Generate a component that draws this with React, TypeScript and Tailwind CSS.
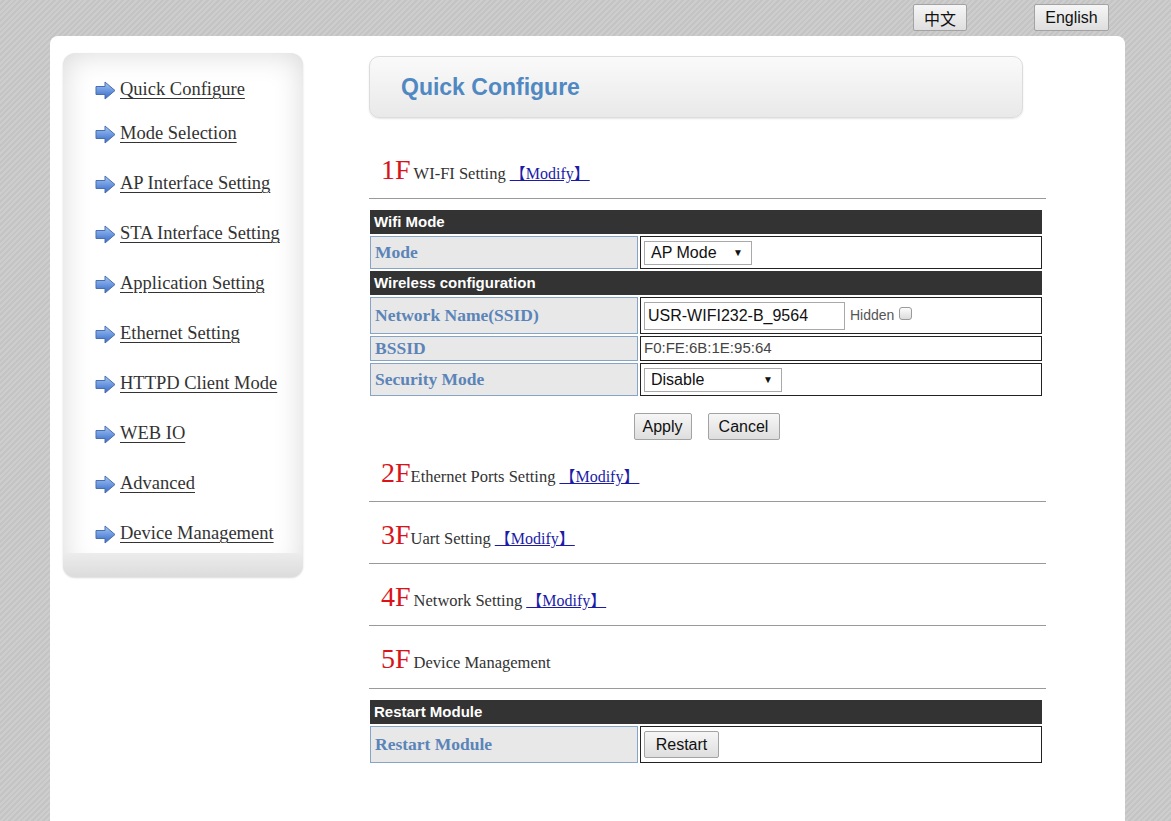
import React from "react";

const serif = "font-['Liberation_Serif','Noto_Sans_CJK_SC',serif]";
const sans = "font-['Liberation_Sans',Arial,sans-serif]";

const menu = [
  "Quick Configure",
  "Mode Selection",
  "AP Interface Setting",
  "STA Interface Setting",
  "Application Setting",
  "Ethernet Setting",
  "HTTPD Client Mode",
  "WEB IO",
  "Advanced",
  "Device Management",
];

function ArrowIcon() {
  return (
    <svg width="21" height="19" viewBox="0 0 21 19" className="shrink-0">
      <defs>
        <linearGradient id="arr" x1="0" y1="0" x2="0" y2="1">
          <stop offset="0" stopColor="#a9c6f2" />
          <stop offset="0.5" stopColor="#6b98e0" />
          <stop offset="1" stopColor="#3b68c2" />
        </linearGradient>
      </defs>
      <polygon
        points="1,5.5 10,5.5 10,1 20,9.5 10,18 10,13.5 1,13.5"
        fill="url(#arr)"
        stroke="#4a6fae"
        strokeWidth="1"
        strokeLinejoin="round"
      />
    </svg>
  );
}

function GrayButton({ children, className = "" }: { children: React.ReactNode; className?: string }) {
  return (
    <button
      className={`flex items-center justify-center rounded-[2px] border border-[#a3a3a3] bg-gradient-to-b from-[#f6f6f6] to-[#dedede] text-[16px] text-[#111] ${sans} ${className}`}
    >
      {children}
    </button>
  );
}

function FakeSelect({ value, width }: { value: string; width: string }) {
  return (
    <div
      className={`flex h-[24px] items-center justify-between border border-[#a9a9a9] bg-white pl-[6px] pr-[8px] text-[16px] text-[#111] ${sans} ${width}`}
    >
      <span>{value}</span>
      <span className="text-[10px]">▼</span>
    </div>
  );
}

function Section({
  num,
  label,
  modify,
  space = true,
  className = "",
}: {
  num: string;
  label: string;
  modify?: boolean;
  space?: boolean;
  className?: string;
}) {
  return (
    <div className={`border-b border-[#9a9a9a] pb-[12px] pt-[19px] ${className}`}>
      <div className={`flex h-[30px] items-baseline pl-[12px] ${serif}`}>
        <span className="text-[28px] leading-[28px] text-[#d8141a]">{num}</span>
        <span className={`text-[16.5px] text-[#333] ${space ? "ml-[3px]" : ""}`}>{label}</span>
        {modify && (
          <a href="#" className="ml-[4px] text-[16px] text-[#1b1ba8] underline">
            【Modify】
          </a>
        )}
      </div>
    </div>
  );
}

function HeadRow({ title }: { title: string }) {
  return (
    <div className={`flex h-[24px] items-center bg-[#333] pl-[4px] text-[15px] font-bold text-white ${sans}`}>
      {title}
    </div>
  );
}

function Row({ label, h, children }: { label: string; h: string; children: React.ReactNode }) {
  return (
    <div className={`flex gap-[2px] ${h}`}>
      <div
        className={`flex w-[268px] shrink-0 items-center border border-[#86a4c6] bg-[#e8e8e8] pl-[4px] text-[17.5px] font-bold text-[#5b84b8] ${serif}`}
      >
        {label}
      </div>
      <div className="flex flex-1 items-center border border-[#222] bg-white pl-[3px]">{children}</div>
    </div>
  );
}

export default function App() {
  return (
    <div className="min-h-[821px] w-full bg-[repeating-linear-gradient(135deg,#cdcdcd_0px,#cdcdcd_2px,#c4c4c4_2px,#c4c4c4_4px)]">
      <div className="flex h-[36px] items-start justify-end gap-[67px] pr-[62px] pt-[4px]">
        <GrayButton className="h-[27px] w-[54px] font-['Noto_Sans_CJK_SC',sans-serif] leading-none">中文</GrayButton>
        <GrayButton className="h-[27px] w-[75px]">English</GrayButton>
      </div>

      <div className="ml-[50px] flex min-h-[785px] w-[1075px] rounded-t-[8px] bg-white">
        {/* sidebar */}
        <div className="ml-[13px] mt-[17px] flex h-[524px] w-[240px] shrink-0 flex-col overflow-hidden rounded-[12px] bg-white shadow-[inset_0_0_30px_rgba(0,0,0,0.16),0_1px_2px_rgba(0,0,0,0.15)]">
          <div className="flex flex-1 flex-col pl-[32px] pt-[23px]">
            {menu.map((m, i) => (
              <div key={m} className={`flex h-[28px] items-center gap-[4px] ${i === 0 ? "" : i === 1 ? "mt-[16px]" : "mt-[22px]"}`}>
                <ArrowIcon />
                <a href="#" className={`text-[18.5px] text-[#333] underline decoration-1 underline-offset-[3px] ${serif}`}>
                  {m}
                </a>
              </div>
            ))}
          </div>
          <div className="h-[24px] bg-gradient-to-b from-[#ececec] to-[#dcdcdc]" />
        </div>

        {/* content */}
        <div className="ml-[66px] w-[677px]">
          <div className="mt-[20px] flex h-[62px] w-[654px] items-center rounded-[10px] border border-[#dcdcdc] bg-gradient-to-b from-[#fafafa] to-[#e9e9e9] pl-[31px] shadow-[0_1px_2px_rgba(0,0,0,0.1)]">
            <span className={`text-[23px] font-bold text-[#5088c2] ${sans}`}>Quick Configure</span>
          </div>

          <Section num="1F" label="WI-FI Setting" modify className="mt-[19px]" />

          <div className="mt-[11px] flex w-[673px] flex-col gap-[2px] pl-[1px]">
            <HeadRow title="Wifi Mode" />
            <Row label="Mode" h="h-[33px]">
              <FakeSelect value="AP Mode" width="w-[108px]" />
            </Row>
            <HeadRow title="Wireless configuration" />
            <Row label="Network Name(SSID)" h="h-[37px]">
              <div className={`flex h-[28px] w-[201px] items-center border border-[#a9a9a9] pl-[3px] text-[16px] text-[#111] ${sans}`}>
                USR-WIFI232-B_9564
              </div>
              <span className={`ml-[5px] text-[14px] text-[#555] ${sans}`}>Hidden</span>
              <input
                type="checkbox"
                className="mb-[5px] ml-[5px] h-[13px] w-[13px] appearance-none rounded-[3px] border border-[#9a9a9a] bg-gradient-to-b from-[#fcfcfc] to-[#dcdcdc]"
              />
            </Row>
            <Row label="BSSID" h="h-[25px]">
              <span className={`text-[15px] text-[#444] ${sans}`}>F0:FE:6B:1E:95:64</span>
            </Row>
            <Row label="Security Mode" h="h-[33px]">
              <FakeSelect value="Disable" width="w-[138px]" />
            </Row>
          </div>

          <div className="mt-[17px] flex w-[673px] justify-center gap-[16px] pl-[2px]">
            <GrayButton className="h-[27px] w-[58px]">Apply</GrayButton>
            <GrayButton className="h-[27px] w-[72px]">Cancel</GrayButton>
          </div>

          <Section num="2F" label="Ethernet Ports Setting" modify space={false} />
          <Section num="3F" label="Uart Setting" modify space={false} />
          <Section num="4F" label="Network Setting" modify />
          <Section num="5F" label="Device Management" className="!pb-[13px]" />

          <div className="mt-[11px] flex w-[673px] flex-col gap-[2px] pl-[1px]">
            <HeadRow title="Restart Module" />
            <Row label="Restart Module" h="h-[37px]">
              <GrayButton className="h-[27px] w-[75px]">Restart</GrayButton>
            </Row>
          </div>
        </div>
      </div>
    </div>
  );
}
